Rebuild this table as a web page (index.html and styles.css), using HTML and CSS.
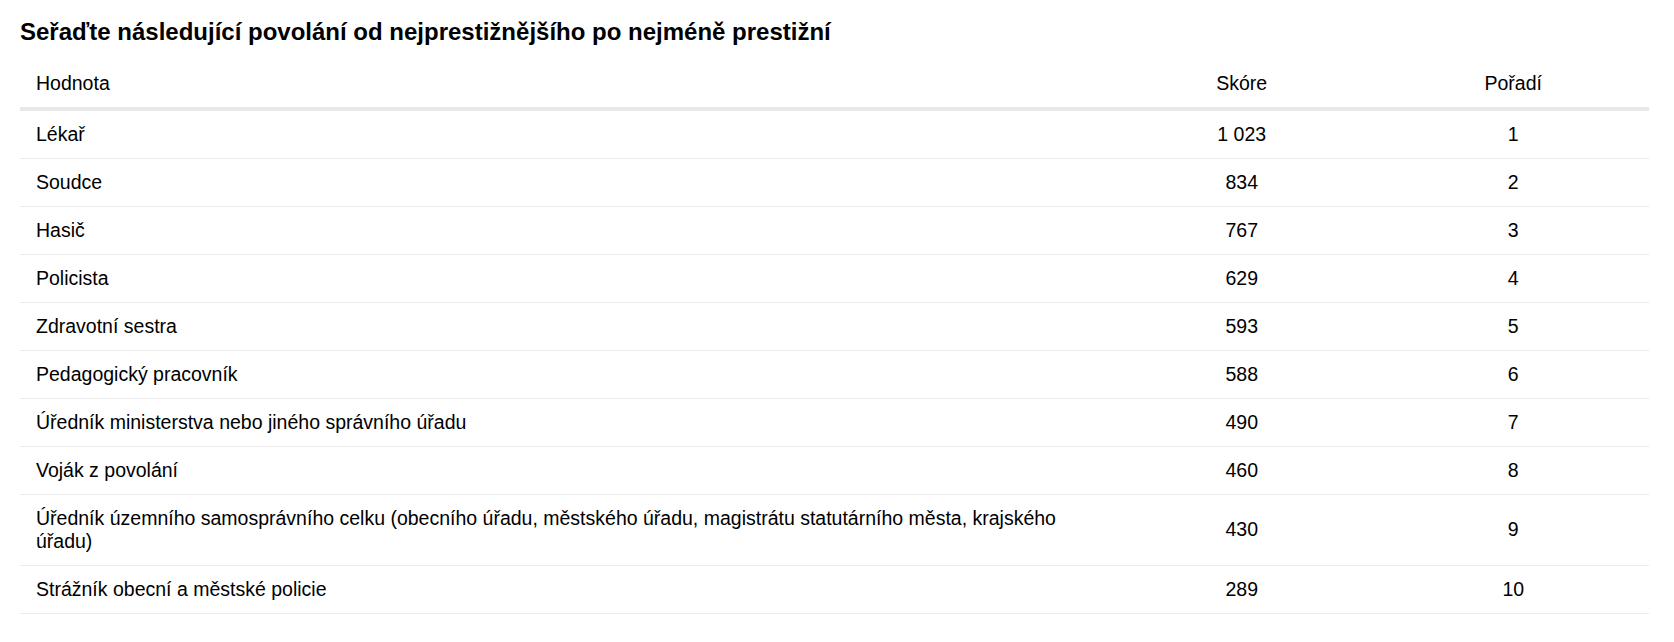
FILE: index.html
```html
<!DOCTYPE html>
<html lang="cs">
<head>
<meta charset="utf-8">
<title>Pořadí povolání</title>
<link rel="stylesheet" href="styles.css">
</head>
<body>
<div class="page">
  <h2 class="title">Seřaďte následující povolání od nejprestižnějšího po nejméně prestižní</h2>
  <table class="results">
    <colgroup>
      <col class="col-value">
      <col class="col-score">
      <col class="col-rank">
    </colgroup>
    <thead>
      <tr>
        <th class="left">Hodnota</th>
        <th>Skóre</th>
        <th>Pořadí</th>
      </tr>
    </thead>
    <tbody>
      <tr><td class="left">Lékař</td><td>1&nbsp;023</td><td>1</td></tr>
      <tr><td class="left">Soudce</td><td>834</td><td>2</td></tr>
      <tr><td class="left">Hasič</td><td>767</td><td>3</td></tr>
      <tr><td class="left">Policista</td><td>629</td><td>4</td></tr>
      <tr><td class="left">Zdravotní sestra</td><td>593</td><td>5</td></tr>
      <tr><td class="left">Pedagogický pracovník</td><td>588</td><td>6</td></tr>
      <tr><td class="left">Úředník ministerstva nebo jiného správního úřadu</td><td>490</td><td>7</td></tr>
      <tr><td class="left">Voják z povolání</td><td>460</td><td>8</td></tr>
      <tr><td class="left">Úředník územního samosprávního celku (obecního úřadu, městského úřadu, magistrátu statutárního města, krajského úřadu)</td><td>430</td><td>9</td></tr>
      <tr><td class="left">Strážník obecní a městské policie</td><td>289</td><td>10</td></tr>
    </tbody>
  </table>
</div>
</body>
</html>
```
FILE: styles.css
```css
html, body {
  margin: 0;
  padding: 0;
  background: #ffffff;
}

body {
  font-family: "Liberation Sans", Arial, sans-serif;
  color: #000000;
}

.page {
  padding: 18px 25px 0 20px;
}

.title {
  margin: 0 0 13px 0;
  font-size: 24px;
  line-height: 28.8px;
  font-weight: bold;
  color: #000000;
}

.results {
  width: 100%;
  border-collapse: collapse;
  table-layout: fixed;
  font-size: 19.5px;
  line-height: 23px;
}

.col-value {
  width: 66.6667%;
}

.col-score,
.col-rank {
  width: 16.6667%;
}

.results th,
.results td {
  padding: 12px 16px;
  text-align: center;
  vertical-align: middle;
  font-weight: normal;
}

.results th {
  border-bottom: 4px solid #e8e8e8;
}

.results td {
  border-bottom: 1px solid #ebebeb;
}

.results .left {
  text-align: left;
}
```
